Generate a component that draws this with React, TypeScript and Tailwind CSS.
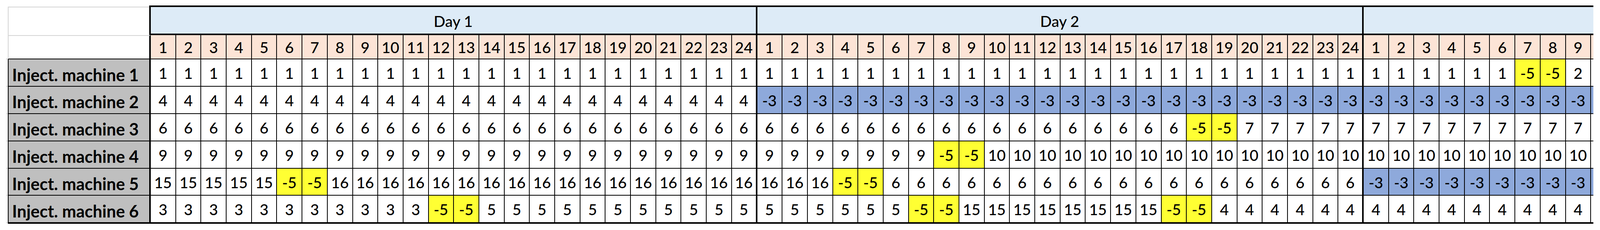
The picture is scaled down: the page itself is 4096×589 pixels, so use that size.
import React from "react";

type Kind = "w" | "y" | "b";
type Cell = { v: string; k: Kind };

const rep = (v: string, n: number, k: Kind = "w"): Cell[] =>
  Array.from({ length: n }, () => ({ v, k }));
const one = (v: string, k: Kind = "w"): Cell[] => [{ v, k }];

const rows: Cell[][] = [
  [...rep("1", 24), ...rep("1", 24), ...rep("1", 6), ...rep("-5", 2, "y"), ...one("2"), ...one("")],
  [...rep("4", 24), ...rep("-3", 24, "b"), ...rep("-3", 9, "b"), ...one("", "b")],
  [...rep("6", 24), ...rep("6", 17), ...rep("-5", 2, "y"), ...rep("7", 5), ...rep("7", 9), ...one("")],
  [...rep("9", 24), ...rep("9", 7), ...rep("-5", 2, "y"), ...rep("10", 15), ...rep("10", 9), ...one("")],
  [
    ...rep("15", 5),
    ...rep("-5", 2, "y"),
    ...rep("16", 17),
    ...rep("16", 3),
    ...rep("-5", 2, "y"),
    ...rep("6", 19),
    ...rep("-3", 9, "b"),
    ...one("", "b"),
  ],
  [
    ...rep("3", 11),
    ...rep("-5", 2, "y"),
    ...rep("5", 11),
    ...rep("5", 6),
    ...rep("-5", 2, "y"),
    ...rep("15", 8),
    ...rep("-5", 2, "y"),
    ...rep("4", 6),
    ...rep("4", 9),
    ...one(""),
  ],
];

const hours: string[] = [
  ...Array.from({ length: 24 }, (_, i) => String(i + 1)),
  ...Array.from({ length: 24 }, (_, i) => String(i + 1)),
  ...Array.from({ length: 9 }, (_, i) => String(i + 1)),
  "",
];

const bgFor = (k: Kind) =>
  k === "y" ? "bg-[#FFFF33]" : k === "b" ? "bg-[#8EA9DB]" : "bg-white";

export default function App() {
  return (
    <div className="w-[4096px] h-[589px] bg-white text-black [font-family:Lato,sans-serif] pl-[16px] pt-[14px]">
      <div className="w-[4063px] overflow-hidden">
        <div className="grid w-max grid-cols-[4px_366px_repeat(57,64.7px)_12px] grid-rows-[76px_62.4px_repeat(5,69.8px)_71.8px]">
          {/* Row 0: day band */}
          <div />
          <div className="border-r-4 border-black flex flex-col">
            <div className="mt-[3px] flex-1 border-t-2 border-l-2 border-[#d4d4d4]" />
          </div>
          <div className="col-span-24 bg-[#DDEBF7] border-t-4 border-b-4 border-r-4 border-black flex items-end justify-center pb-[8px] text-[39px] leading-[1.2] font-medium">
            Day 1
          </div>
          <div className="col-span-24 bg-[#DDEBF7] border-t-4 border-b-4 border-r-4 border-black flex items-end justify-center pb-[8px] text-[39px] leading-[1.2] font-medium">
            Day 2
          </div>
          <div className="col-span-10 bg-[#DDEBF7] border-t-4 border-b-4 border-black" />

          {/* Row 1: hours */}
          <div className="border-b-2 border-[#d4d4d4]" />
          <div className="border-t-2 border-l-2 border-t-[#d4d4d4] border-l-[#d4d4d4] border-r-4 border-r-black border-b-2 border-b-black" />
          {hours.map((h, i) => (
            <div
              key={"h" + i}
              className={
                "bg-[#FCE4D6] border-b-2 border-black flex items-end justify-center pb-[6px] text-[39px] leading-[1.2] font-medium " +
                (i === 23 || i === 47 ? "border-r-4" : "border-r-2")
              }
            >
              {h}
            </div>
          ))}

          {/* Data rows */}
          {rows.map((row, r) => {
            const last = r === rows.length - 1;
            return (
              <React.Fragment key={"r" + r}>
                <div className={last ? "border-b-2 border-[#d4d4d4] mb-[2px]" : "border-b-2 border-[#d4d4d4]"} />
                <div
                  className={
                    "bg-[#BFBFBF] border-l-2 border-r-4 border-black flex items-end pl-[9px] pb-[3px] font-bold text-[43px] leading-[1.2] whitespace-nowrap " +
                    (last ? "border-b-4" : "border-b-2")
                  }
                >
                  Inject. machine {r + 1}
                </div>
                {row.map((c, i) => (
                  <div
                    key={"c" + r + "-" + i}
                    className={
                      bgFor(c.k) +
                      " border-black flex items-end justify-center pb-[9px] text-[39px] leading-[1.2] font-medium " +
                      (i === 23 || i === 47 ? "border-r-4 " : "border-r-2 ") +
                      (last ? "border-b-4" : "border-b-2")
                    }
                  >
                    {c.v}
                  </div>
                ))}
              </React.Fragment>
            );
          })}
        </div>
      </div>
    </div>
  );
}
